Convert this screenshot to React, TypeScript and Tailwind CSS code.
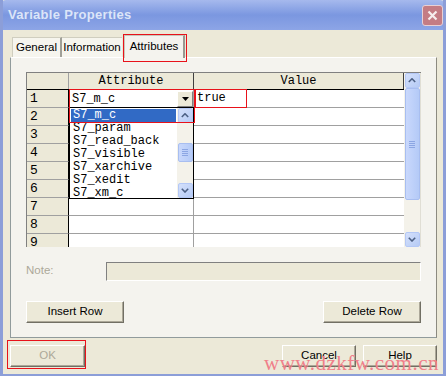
import React from "react";

const mono = { fontFamily: '"Liberation Mono", "DejaVu Sans Mono", monospace' };
const sans = { fontFamily: '"Liberation Sans", "DejaVu Sans", sans-serif' };

function ArrowUp({ size = 8 }: { size?: number }) {
  return (
    <svg width={size} height={size * 0.6} viewBox="0 0 10 6">
      <path d="M1 5 L5 1 L9 5" fill="none" stroke="#4D6185" strokeWidth="2" />
    </svg>
  );
}
function ArrowDown({ size = 8 }: { size?: number }) {
  return (
    <svg width={size} height={size * 0.6} viewBox="0 0 10 6">
      <path d="M1 1 L5 5 L9 1" fill="none" stroke="#4D6185" strokeWidth="2" />
    </svg>
  );
}

function XpBtn({ children, w, disabled }: { children: React.ReactNode; w: string; disabled?: boolean }) {
  return (
    <div
      className={`${w} h-[22px] flex items-center justify-center border border-t-white border-l-white border-r-[#716F64] border-b-[#716F64] bg-[#ECE9D8] shadow-[inset_-1px_-1px_0_#ACA899] text-[11.5px] ${disabled ? "text-[#ACA899]" : "text-black"}`}
      style={sans}
    >
      {children}
    </div>
  );
}

function ScrollBtn({ up }: { up?: boolean }) {
  return (
    <div className="h-[15px] w-[15px] rounded-[2px] bg-gradient-to-br from-[#D4E0FB] to-[#B6CBF5] border border-[#B4C8F6] flex items-center justify-center">
      {up ? <ArrowUp /> : <ArrowDown />}
    </div>
  );
}

function Thumb({ h }: { h: string }) {
  return (
    <div className={`${h} w-[15px] rounded-[2px] bg-gradient-to-r from-[#C9D8FC] to-[#B4CAF7] border border-[#A8BEF0] flex flex-col items-center justify-center gap-[1px]`}>
      <div className="w-[6px] h-[1px] bg-[#8CA6E3]" />
      <div className="w-[6px] h-[1px] bg-[#8CA6E3]" />
      <div className="w-[6px] h-[1px] bg-[#8CA6E3]" />
      <div className="w-[6px] h-[1px] bg-[#8CA6E3]" />
    </div>
  );
}

export default function App() {
  const rows = [1, 2, 3, 4, 5, 6, 7, 8, 9];
  const items = ["S7_param", "S7_read_back", "S7_visible", "S7_xarchive", "S7_xedit", "S7_xm_c"];
  return (
    <div className="relative w-[446px] h-[376px] overflow-hidden bg-[#ECE9D8] border-l-[3px] border-r-[3px] border-b-[2px] border-[#8C9ED8]" style={sans}>
      {/* Title bar */}
      <div className="h-[30px] -mx-[3px] flex items-center justify-between pl-[8px] pr-[3px] rounded-t-[6px] bg-gradient-to-b from-[#A6B9ED] via-[#7B97E0] to-[#8DA5E6]">
        <span className="text-[13px] font-bold text-[#DCE5F8] tracking-[0.3px]">Variable Properties</span>
        <div className="w-[21px] h-[21px] rounded-[3px] bg-[#C47C84] border border-[#E8D0D4] flex items-center justify-center">
          <svg width="11" height="11" viewBox="0 0 11 11">
            <path d="M1.5 1.5 L9.5 9.5 M9.5 1.5 L1.5 9.5" stroke="#F6EDEE" strokeWidth="2.2" />
          </svg>
        </div>
      </div>

      {/* Tabs */}
      <div className="flex items-end h-[27px] pl-[9px]">
        <div className="h-[20px] w-[50px] flex items-center justify-center text-[11.5px] border-t border-l border-[#D0CEBF] bg-[#F6F5EE] border-r-2 border-r-[#A0A098]">General</div>
        <div className="h-[20px] w-[60px] flex items-center justify-center text-[11.5px] border-t border-[#D0CEBF] bg-[#F6F5EE]">Information</div>
        <div className="relative h-[23px] w-[61px] ml-[2px] flex items-center justify-center text-[11.5px] bg-[#F4F3EE] border-t border-l border-[#C9C7BA] border-r-2 border-r-[#9A9890] z-10 -mb-[1px]">
          Attributes
          <div className="absolute -left-[2px] -top-[2px] w-[64px] h-[28px] border border-[#E8121A]" />
        </div>
      </div>

      {/* Tab panel */}
      <div className="ml-[7px] w-[427px] h-[281px] border border-[#919B9C] border-t-white border-r-[#8C8A80] bg-[#F4F3EE] pt-[14px] px-[15px] flex flex-col">
        {/* Grid */}
        <div className="relative h-[175px] flex border-t border-l border-[#808080] bg-white">
          <div className="flex-1 flex flex-col overflow-hidden">
            {/* header */}
            <div className="flex h-[17px] shrink-0 border-b border-black bg-[#ECE9D8]">
              <div className="w-[42px] border-r border-[#A0A0A0]" />
              <div className="w-[125px] border-r border-[#404040] flex items-center justify-center text-[12px]" style={mono}>Attribute</div>
              <div className="flex-1 border-r border-[#404040] flex items-center justify-center text-[12px]" style={mono}>Value</div>
            </div>
            {rows.map((r) => (
              <div key={r} className="flex h-[18px] shrink-0">
                <div className="w-[42px] border-r border-black border-b border-b-[#A0A0A0] bg-[#ECE9D8] pl-[3px] text-[13px] leading-[17px]" style={mono}>{r}</div>
                <div className="w-[125px] border-r border-[#A0A0A0] border-b border-b-[#A0A0A0] relative">
                  {r === 1 && (
                    <div className="absolute inset-0 flex items-center justify-between bg-white">
                      <span className="pl-[3px] text-[12px]" style={mono}>S7_m_c</span>
                      <div className="w-[16px] h-[16px] bg-[#ECE9D8] border border-t-white border-l-white border-r-[#808080] border-b-[#808080] flex items-center justify-center">
                        <svg width="7" height="4" viewBox="0 0 7 4"><path d="M0 0 L7 0 L3.5 4 Z" fill="#000" /></svg>
                      </div>
                    </div>
                  )}
                </div>
                <div className="flex-1 border-b border-[#A0A0A0] text-[12px] pl-[3px] leading-[17px]" style={mono}>
                  {r === 1 ? "true" : ""}
                </div>
              </div>
            ))}
          </div>
          {/* grid scrollbar */}
          <div className="w-[17px] flex flex-col items-center bg-[#F4F2EA] border-r border-[#E0DED4]">
            <ScrollBtn up />
            <Thumb h="h-[112px]" />
            <div className="flex-1" />
            <ScrollBtn />
          </div>

          {/* dropdown list overlay */}
          <div className="absolute left-[42px] top-[34px] w-[125px] h-[92px] bg-white border border-black flex z-10">
            <div className="flex-1 flex flex-col">
              <div className="h-[13px] mx-[1px] mt-[1px] bg-[#316AC5] text-white text-[12px] leading-[13px] pl-[2px]" style={mono}>S7_m_c</div>
              {items.map((it) => (
                <div key={it} className="h-[13px] text-[12px] leading-[13px] pl-[3px]" style={mono}>{it}</div>
              ))}
            </div>
            <div className="w-[16px] flex flex-col items-center bg-[#F4F2EA]">
              <ScrollBtn up />
              <div className="h-[20px]" />
              <Thumb h="h-[19px]" />
              <div className="flex-1" />
              <ScrollBtn />
            </div>
          </div>

          {/* red annotation boxes */}
          <div className="absolute left-[42px] top-[16px] w-[126px] h-[34px] border border-[#E8121A] z-20 pointer-events-none" />
          <div className="absolute left-[168px] top-[16px] w-[52px] h-[19px] border border-[#E8121A] z-20 pointer-events-none" />
        </div>

        {/* Note */}
        <div className="flex items-center mt-[14px] h-[20px]">
          <span className="w-[80px] text-[11.5px] text-[#ACA899]">Note:</span>
          <div className="flex-1 h-[19px] border border-t-[#808080] border-l-[#808080] border-r-white border-b-white bg-[#ECE9D8]" />
        </div>

        {/* Row buttons */}
        <div className="flex justify-between mt-[20px]">
          <XpBtn w="w-[98px]">Insert Row</XpBtn>
          <XpBtn w="w-[98px]">Delete Row</XpBtn>
        </div>
      </div>

      {/* Bottom buttons */}
      <div className="flex items-center mt-[7px] pl-[7px] pr-[6px]">
        <div className="relative">
          <XpBtn w="w-[75px]" disabled>OK</XpBtn>
          <div className="absolute -left-[3px] -top-[5px] w-[79px] h-[29px] border border-[#E8121A]" />
        </div>
        <div className="flex-1" />
        <XpBtn w="w-[74px]">Cancel</XpBtn>
        <div className="w-[7px]" />
        <XpBtn w="w-[74px]">Help</XpBtn>
      </div>

      {/* watermark */}
      <div
        className="absolute right-[4px] bottom-[-5px] text-[21px] text-[#F0808A] tracking-[0.5px] pointer-events-none"
        style={{ fontFamily: '"Liberation Serif", "DejaVu Serif", serif' }}
      >
        www.dzkfw.com.cn
      </div>
    </div>
  );
}
